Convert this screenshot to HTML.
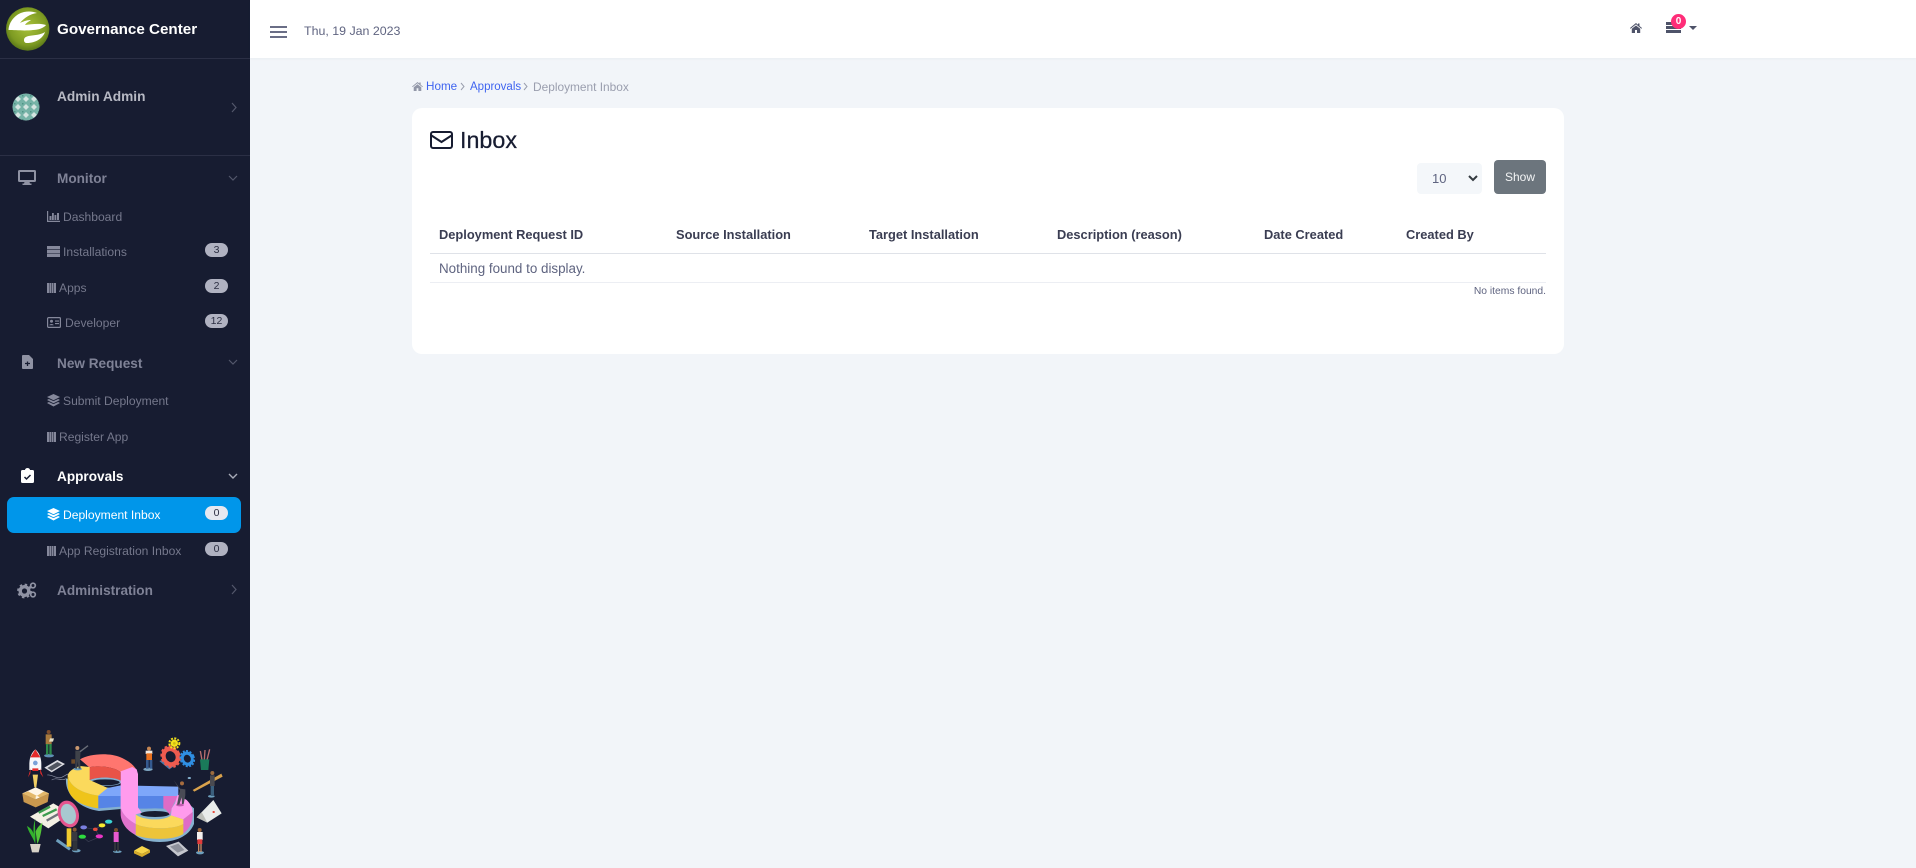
<!DOCTYPE html>
<html lang="en"><head><meta charset="utf-8"><title>Inbox - Governance Center</title>
<style>
*{box-sizing:border-box}
html,body{margin:0;padding:0;width:1916px;height:868px;overflow:hidden;background:#f2f5f9;font-family:"Liberation Sans",sans-serif}
#side{position:absolute;left:0;top:0;width:250px;height:868px;background:#171c31}
#top{position:absolute;left:250px;top:0;width:1666px;height:58px;background:#fff;box-shadow:0 1px 2px rgba(60,70,90,.05)}
.t{position:absolute;white-space:nowrap;line-height:20px;height:20px}
.h{left:57px;font-size:13.6px;font-weight:700;color:#7f8296}
.s{font-size:12.1px;color:#75788c}
.b{position:absolute;left:205px;width:23px;height:14px;border-radius:7px;background:#b0b2c1;color:#2b2e42;font-size:10.5px;line-height:15px;text-align:center}
.hr{position:absolute;left:0;width:250px;height:1px;background:#2b2f45}
.th{position:absolute;white-space:nowrap;top:225px;line-height:20px;font-size:12.85px;font-weight:700;color:#3a3d52}
svg{position:absolute;overflow:visible}
</style></head><body>
<div id="side">
<svg style="left:0;top:0" width="60" height="60" viewBox="0 0 60 60"><defs><radialGradient id="g" cx=".5" cy=".45" r=".6"><stop offset="0" stop-color="#a9c23a"/><stop offset=".7" stop-color="#7d9a22"/><stop offset="1" stop-color="#4c6a14"/></radialGradient></defs><circle cx="27.7" cy="29" r="21.7" fill="url(#g)"/><path d="M8.500 30C9 22 15 14 24 12c5-1 9-.5 13 1-7 1-13 5-17 10 4-2 8-3 11-3-3 2-5 3-6 5 7-1 15-2 21 0-2 3-8 5-13 5-8 1-18 0-24.500 0z" fill="#fff"/><path d="M24 40c0-3 3-4 8-4.500 5-.5 10-1.500 13-3.500-2 6-9 11-18 11-2 0-3-1-3-3z" fill="#fff"/></svg>
<span class="t" style="left:57px;top:20px;font-size:15.2px;font-weight:700;color:#fff">Governance Center</span>
<div class="hr" style="top:58px"></div>

<svg style="left:12px;top:93px" width="28" height="28" viewBox="0 0 28 28"><defs><pattern id="p" width="8" height="8" patternUnits="userSpaceOnUse" x="2" y="2"><rect width="8" height="8" fill="#76b3a7"/><path d="M4 1l3 3-3 3-3-3z" fill="#d3e4e0"/><path d="M0 0h1.500v1.500H0z" fill="#4f9486"/></pattern></defs><circle cx="14" cy="14" r="13.5" fill="url(#p)"/></svg>
<span class="t" style="left:57px;top:87px;font-size:13.7px;font-weight:700;color:#b7b9c4">Admin Admin</span>
<svg style="left:230px;top:101px" width="8" height="12" fill="none" stroke="#53576b" stroke-width="1.2"><path d="M2 2l4 4.500L2 11"/></svg>
<div class="hr" style="top:155px"></div>

<svg style="left:18px;top:170px" width="18" height="15" viewBox="0 0 18 15"><path d="M1.500 0h15A1.500 1.500 0 0 1 18 1.500v9a1.500 1.500 0 0 1-1.500 1.500H11.500l.5 1.500h1.500v1.500h-9V13.500H6L6.500 12H1.500A1.500 1.500 0 0 1 0 10.500v-9A1.500 1.500 0 0 1 1.500 0zM2 2v8h14V2z" fill="#8f92a3"/></svg>
<span class="t h" style="top:169px">Monitor</span>
<svg style="left:228px;top:174px" width="10" height="8" fill="none" stroke="#53576b" stroke-width="1.2"><path d="M1 2l4 4 4-4"/></svg>

<svg style="left:47px;top:211px" width="13" height="11" viewBox="0 0 13 11"><path d="M0 0h1.200v9.800H13V11H0zM2.500 5h2v4h-2zM5 2h1.800v7H5zM7.500 4h1.800v5H7.500zM10 2h2v7h-2z" fill="#85889b"/></svg>
<span class="t s" style="left:63px;top:207px">Dashboard</span>

<svg style="left:47px;top:246px" width="13" height="11" viewBox="0 0 13 11"><path d="M0 0h13v3.300H0zM0 3.900h13v3.300H0zM0 7.800h13V11H0z" fill="#85889b"/></svg>
<span class="t s" style="left:63px;top:242px">Installations</span>
<span class="b" style="top:243px">3</span>

<svg style="left:47px;top:283px" width="9" height="10" viewBox="0 0 9 10"><path d="M0 0h2v10H0zM2.400 0h1.800v10H2.400zM4.700 0h1.800v10H4.700zM7 0h2v10H7z" fill="#85889b"/></svg>
<span class="t s" style="left:59px;top:278px">Apps</span>
<span class="b" style="top:279px">2</span>

<svg style="left:47px;top:317px" width="14" height="11" viewBox="0 0 14 11"><rect x=".6" y=".6" width="12.800" height="9.800" rx="1" fill="none" stroke="#85889b" stroke-width="1.200"/><circle cx="4.500" cy="4.200" r="1.500" fill="#85889b"/><path d="M2.300 8.300c0-1.800 4.400-1.800 4.400 0zM8 3.500h4v1.100H8zM8 6h4v1.100H8z" fill="#85889b"/></svg>
<span class="t s" style="left:65px;top:313px">Developer</span>
<span class="b" style="top:314px">12</span>

<svg style="left:22px;top:355px" width="11" height="14" viewBox="0 0 11 14"><path d="M1 0h6l4 4v9a1 1 0 0 1-1 1H1a1 1 0 0 1-1-1V1a1 1 0 0 1 1-1z" fill="#8f92a3"/><path d="M3 8.500h5M5.500 6.500v4.500" stroke="#171c31" stroke-width="1.300"/></svg>
<span class="t h" style="top:354px">New Request</span>
<svg style="left:228px;top:358px" width="10" height="8" fill="none" stroke="#53576b" stroke-width="1.2"><path d="M1 2l4 4 4-4"/></svg>

<svg style="left:47px;top:394px" width="13" height="13" viewBox="0 0 13 13"><path d="M6.500 0L13 3 6.500 6.200 0 3zM1.800 5L6.500 7.100 11.200 5 13 6 6.500 9.200 0 6zM1.800 8L6.500 10.100 11.200 8 13 9 6.500 12.500 0 9z" fill="#85889b"/></svg>
<span class="t s" style="left:63px;top:391px">Submit Deployment</span>

<svg style="left:47px;top:432px" width="9" height="10" viewBox="0 0 9 10"><path d="M0 0h2v10H0zM2.400 0h1.800v10H2.400zM4.700 0h1.800v10H4.700zM7 0h2v10H7z" fill="#85889b"/></svg>
<span class="t s" style="left:59px;top:427px">Register App</span>

<svg style="left:21px;top:468px" width="13" height="15" viewBox="0 0 13 15"><path d="M1.500 2H4a2.500 2 0 0 1 5 0h2.500A1.500 1.500 0 0 1 13 3.500v10a1.500 1.500 0 0 1-1.500 1.500h-10A1.500 1.500 0 0 1 0 13.500v-10A1.500 1.500 0 0 1 1.500 2z" fill="#fff"/><path d="M3.500 9l2 2 4-4" fill="none" stroke="#171c31" stroke-width="1.500"/></svg>
<span class="t h" style="top:467px;color:#fff">Approvals</span>
<svg style="left:228px;top:472px" width="10" height="8" fill="none" stroke="#a8abb8" stroke-width="1.4"><path d="M1 2l4 4 4-4"/></svg>

<div style="position:absolute;left:7px;top:497px;width:234px;height:36px;border-radius:7px;background:#0096ea"></div>
<svg style="left:47px;top:508px" width="13" height="13" viewBox="0 0 13 13"><path d="M6.500 0L13 3 6.500 6.200 0 3zM1.800 5L6.500 7.100 11.200 5 13 6 6.500 9.200 0 6zM1.800 8L6.500 10.100 11.200 8 13 9 6.500 12.500 0 9z" fill="#fff"/></svg>
<span class="t s" style="left:63px;top:505px;color:#fff">Deployment Inbox</span>
<span class="b" style="top:506px;background:#e6e8f0">0</span>

<svg style="left:47px;top:546px" width="9" height="10" viewBox="0 0 9 10"><path d="M0 0h2v10H0zM2.400 0h1.800v10H2.400zM4.700 0h1.800v10H4.700zM7 0h2v10H7z" fill="#85889b"/></svg>
<span class="t s" style="left:59px;top:541px">App Registration Inbox</span>
<span class="b" style="top:542px">0</span>

<svg style="left:17px;top:582px" width="20" height="16" viewBox="0 0 20 16"><circle cx="7.500" cy="9" r="4.300" fill="none" stroke="#8f92a3" stroke-width="3.400"/><circle cx="7.500" cy="9" r="6.500" fill="none" stroke="#8f92a3" stroke-width="1.800" stroke-dasharray="2.500 2.600"/><circle cx="16" cy="3.500" r="2.300" fill="none" stroke="#8f92a3" stroke-width="1.700"/><circle cx="16" cy="12.500" r="2.300" fill="none" stroke="#8f92a3" stroke-width="1.700"/></svg>
<span class="t h" style="top:581px">Administration</span>
<svg style="left:230px;top:583px" width="8" height="12" fill="none" stroke="#53576b" stroke-width="1.2"><path d="M2 2l4 4.500L2 11"/></svg>

<!-- infinity illustration -->
<svg style="left:0;top:700px" width="260" height="168" viewBox="0 0 780 504">
<!-- rim -->
<path d="M198 235C194 285 240 325 297 333L362 327C364 370 400 412 440 422C490 432 560 425 582 372L582 325 540 290 300 260Z" fill="#85b1cf"/>
<!-- left hole -->
<ellipse cx="315" cy="245" rx="50" ry="13" fill="#85b1cf"/>
<ellipse cx="315" cy="247" rx="44" ry="9" fill="#171c31"/>
<!-- red -->
<path d="M240 178C270 160 330 158 362 172 385 182 402 195 411 212L362 217C345 202 300 195 268 202Z" fill="#ff766f"/>
<path d="M268 202C300 195 345 202 362 217V242C345 232 300 228 268 240Z" fill="#e95347"/>
<!-- yellow left -->
<path d="M203 225C208 212 222 204 240 198L269 201V240L323 264 295 287C250 280 208 262 203 225Z" fill="#fbd95c"/>
<path d="M203 225C208 262 250 280 295 287V325C245 318 200 296 203 250Z" fill="#efc41a"/>
<!-- blue -->
<path d="M295 287L323 264 362 256 535 260V290H295Z" fill="#7ea7fa"/>
<path d="M295 288H362V320L295 325ZM413 288H492V326H413Z" fill="#5684e6"/>
<!-- right hole -->
<ellipse cx="465" cy="340" rx="52" ry="15" fill="#85b1cf"/>
<ellipse cx="465" cy="342" rx="44" ry="9" fill="#171c31"/>
<!-- pink right -->
<path d="M490 288H533L515 325 510 345C500 330 495 326 490 325Z" fill="#df6cc6"/>
<path d="M533 284L560 300C572 312 578 325 578 336L550 358 513 346 515 325 525 310Z" fill="#ff9bed"/>
<path d="M550 358L578 336C580 358 572 385 550 400Z" fill="#df6cc6"/>
<!-- yellow bottom -->
<path d="M407 343C425 360 490 365 513 346L550 358V372C520 390 440 388 407 372Z" fill="#fbd95c"/>
<path d="M407 372C440 388 520 390 550 372V402C520 422 440 420 407 405Z" fill="#edc43a"/>
<!-- pink strip -->
<path d="M362 214L397 201 410 208 414 222V322L425 338 407 343V372C385 360 366 342 362 322Z" fill="#ff9bed"/>
<path d="M362 322C366 342 385 360 407 372V405C385 395 364 372 362 345Z" fill="#e173cc"/>
<!-- top-left man -->
<ellipse cx="233" cy="207" rx="13" ry="4" fill="#6d9fbd"/>
<path d="M226 152h16l-2 30 2 24h-6l-3-22-2 22h-5z" fill="#3f4249"/><circle cx="232" cy="144" r="6" fill="#c9986f"/><path d="M240 155l24-18" stroke="#6a6e78" stroke-width="4"/><rect x="214" y="178" width="11" height="13" fill="#6d4b2a"/>
<!-- man top far left -->
<ellipse cx="147" cy="167" rx="15" ry="5" fill="#5e8fb4"/>
<rect x="137" y="103" width="18" height="30" fill="#a97a3d"/><circle cx="146" cy="96" r="6" fill="#7f4e2c"/><rect x="138" y="132" width="7" height="32" fill="#2d8a4a"/><rect x="148" y="132" width="7" height="32" fill="#2d8a4a"/><path d="M150 115h12l-3 10h-12z" fill="#e6e1c8"/>
<!-- rocket -->
<path d="M106 148C118 158 124 174 124 193V210H88V193C88 174 94 158 106 148Z" fill="#f7f7fa"/><path d="M106 148L91 172H121ZM92 205L84 232 91 220ZM120 205L130 232 121 220ZM97 205H115V213H97Z" fill="#e52b2b"/><circle cx="106" cy="189" r="7" fill="#7aa0d8"/><path d="M98 224H114L109 262H103Z" fill="#f1cf64"/>
<!-- box -->
<path d="M67 280L107 262 147 280 107 298Z" fill="#fff6e6"/><path d="M67 280L107 298V322L71 306ZM147 280L107 298V322L143 306Z" fill="#c9984e"/><path d="M67 280L84 274 120 292 107 298ZM147 280L132 274 107 290V298Z" fill="#e4b96b"/>
<!-- phone + cables -->
<path d="M133 203L172 180 195 192 155 217Z" fill="#dcdce2"/><path d="M142 204L172 186 186 193 155 212Z" fill="#50545f"/>
<path d="M142 225C155 222 170 238 185 232 195 228 200 222 205 222M155 240C170 230 185 245 198 236" fill="none" stroke="#8a8fa3" stroke-width="2"/>
<!-- doc -->
<path d="M90 350L160 310 212 340 145 385Z" fill="#f4f1e4"/><path d="M116 338L150 320M128 348L170 328" stroke="#3d9c4e" stroke-width="7"/><path d="M140 362L175 342" stroke="#70737b" stroke-width="7"/>
<!-- magnifier -->
<path d="M170 420L210 448" stroke="#6d9fbd" stroke-width="9"/><rect x="200" y="385" width="14" height="55" fill="#f0cb2e"/>
<ellipse cx="205" cy="342" rx="31" ry="41" fill="#e5558e" transform="rotate(-18 205 342)"/><ellipse cx="205" cy="342" rx="22" ry="31" fill="#a8c8d0" transform="rotate(-18 205 342)"/>
<ellipse cx="229" cy="452" rx="13" ry="5" fill="#6d9fbd"/><rect x="216" y="396" width="16" height="28" fill="#3a3a40"/><rect x="218" y="424" width="14" height="28" fill="#2f333a"/><circle cx="224" cy="389" r="6" fill="#8a5a36"/>
<!-- plant -->
<path d="M107 355C102 373 108 388 106 432 98 410 86 398 81 378 92 384 98 392 101 402 100 385 100 370 107 355Z" fill="#33b32d"/><path d="M107 395C111 383 120 375 127 368 125 390 121 415 112 432Z" fill="#53c538"/><path d="M90 432H122L116 457H96Z" fill="#d8d3c8"/>
<!-- flow -->
<path d="M250 382L285 388 305 375M285 388L300 410 265 425 248 410M285 388L325 365" fill="none" stroke="#3c4055" stroke-width="2"/>
<ellipse cx="251" cy="382" rx="10" ry="6" fill="#7a7fe0"/><ellipse cx="286" cy="388" rx="7" ry="5" fill="#e74c3c"/><ellipse cx="306" cy="376" rx="10" ry="6" fill="#f7ea2f"/><ellipse cx="326" cy="365" rx="11" ry="6" fill="#3bd4d4"/><ellipse cx="298" cy="409" rx="11" ry="6" fill="#e835c4"/><ellipse cx="247" cy="410" rx="11" ry="6" fill="#2edb3f"/>
<!-- pink person -->
<ellipse cx="352" cy="455" rx="13" ry="4" fill="#6d9fbd"/><rect x="341" y="396" width="15" height="30" fill="#e85ad1"/><circle cx="348" cy="390" r="6" fill="#7b4f2c"/><rect x="342" y="426" width="6" height="28" fill="#2f333a"/><rect x="351" y="426" width="6" height="28" fill="#2f333a"/>
<!-- block + calc -->
<path d="M402 452L426 438 450 450 426 462Z" fill="#f7d54a"/><path d="M402 452L426 462 450 450V458L426 471 402 460Z" fill="#d6ac2b"/>
<path d="M498 438L536 425 565 452 534 469Z" fill="#c5c7ce"/><path d="M510 440L535 431 553 450 533 458Z" fill="#8e919b"/>
<!-- woman right -->
<ellipse cx="600" cy="458" rx="12" ry="5" fill="#6d9fbd"/><rect x="591" y="396" width="17" height="24" fill="#f4f0ee"/><rect x="592" y="418" width="15" height="14" fill="#e23b3b"/><circle cx="599" cy="390" r="6" fill="#a66c3e"/><rect x="594" y="432" width="4" height="24" fill="#c88c62"/><rect x="601" y="432" width="4" height="24" fill="#c88c62"/>
<!-- orange man -->
<ellipse cx="444" cy="208" rx="14" ry="5" fill="#7da5c0"/><rect x="437" y="152" width="20" height="10" fill="#efe7df"/><rect x="439" y="160" width="17" height="20" fill="#e8701f"/><circle cx="447" cy="146" r="6" fill="#c68653"/><rect x="438" y="180" width="8" height="26" fill="#355a8f"/><rect x="449" y="180" width="8" height="26" fill="#355a8f"/>
<!-- gears -->
<path d="M478 183L508 208 520 200 495 178Z" fill="#4e79a7"/>
<g transform="translate(512 170) rotate(-25) scale(.85 1)"><circle r="24" fill="none" stroke="#ee5b4f" stroke-width="14"/><circle r="32" fill="none" stroke="#ee5b4f" stroke-width="6" stroke-dasharray="9 7"/></g>
<g transform="translate(562 176) rotate(-25) scale(.85 1)"><circle r="17" fill="none" stroke="#2f8fe3" stroke-width="10"/><circle r="24" fill="none" stroke="#2f8fe3" stroke-width="5" stroke-dasharray="7 5"/></g>
<circle cx="523" cy="130" r="11" fill="#f3e21b"/><circle cx="523" cy="130" r="15" fill="none" stroke="#f3e21b" stroke-width="6" stroke-dasharray="6 4"/><circle cx="523" cy="130" r="4" fill="#cdbb14"/>
<!-- cup -->
<path d="M606 180L601 153M613 180L615 150M621 180L629 148" stroke="#b96f6f" stroke-width="4"/><path d="M600 178H628L625 210H603Z" fill="#1a7a5a"/>
<!-- ruler + person -->
<path d="M578 270L664 221 668 230 583 275Z" fill="#d9a24c"/><ellipse cx="634" cy="289" rx="10" ry="4" fill="#6d9fbd"/><rect x="630" y="226" width="14" height="32" fill="#4a4a50"/><circle cx="637" cy="219" r="6" fill="#9c6b3e"/><rect x="632" y="258" width="10" height="30" fill="#3a5f7d"/>
<!-- man on loop -->
<ellipse cx="540" cy="315" rx="12" ry="4" fill="#c25cb0"/><path d="M521 240L540 266 556 268V286L551 312H546L545 292 538 314H531L537 284 540 272Z" fill="#4a4b55"/><circle cx="546" cy="250" r="6" fill="#a66c3e"/>
<ellipse cx="568" cy="234" rx="5" ry="3" fill="#85b1cf"/>
<!-- calendar -->
<path d="M590 352L640 300 665 340 622 368Z" fill="#e9ecea"/><path d="M590 352L605 336 622 368Z" fill="#bdbfb9"/><rect x="638" y="333" width="6" height="6" fill="#e74c3c"/>
</svg>
</div>

<div id="top"></div>
<svg style="left:270px;top:26px" width="17" height="12"><path d="M0 1h17M0 6h17M0 11h17" stroke="#555a75" stroke-width="1.700"/></svg>
<span class="t" style="left:304px;top:21px;font-size:12.4px;color:#5f6480">Thu, 19 Jan 2023</span>
<svg style="left:1630px;top:23px" width="12" height="10" viewBox="0 0 12 10"><path d="M6 0l2 1.700V.5h1.500V3L12 5l-.6.700L6 1.400.6 5.700 0 5zM1.800 5.800L6 2.500l4.200 3.300V10H7V7H5v3H1.800z" fill="#4e5369"/></svg>
<svg style="left:1666px;top:22px" width="15" height="11" viewBox="0 0 15 11"><path d="M0 0h15v3H0zM0 4h15v3H0zM0 8h15v3H0z" fill="#4e5369"/></svg>
<div style="position:absolute;left:1671px;top:14px;width:15px;height:15px;border-radius:50%;background:#ff2d78;color:#fff;font-size:10px;font-weight:700;line-height:15px;text-align:center">0</div>
<svg style="left:1689px;top:26px" width="8" height="5"><path d="M0 0h8L4 4z" fill="#4e5369"/></svg>

<svg style="left:412px;top:82px" width="11" height="9" viewBox="0 0 12 10"><path d="M6 0l2 1.700V.5h1.500V3L12 5l-.6.700L6 1.400.6 5.700 0 5zM1.800 5.800L6 2.500l4.200 3.300V10H7V7H5v3H1.800z" fill="#9297a8"/></svg>
<span class="t" style="left:426px;top:77px;font-size:11.7px;color:#3f64f0">Home</span>
<svg style="left:460px;top:82px" width="6" height="9" fill="none" stroke="#9a9eae" stroke-width="1"><path d="M1 1l3 3.500L1 8"/></svg>
<span class="t" style="left:470px;top:77px;font-size:11.500px;color:#3f64f0">Approvals</span>
<svg style="left:523px;top:82px" width="6" height="9" fill="none" stroke="#9a9eae" stroke-width="1"><path d="M1 1l3 3.500L1 8"/></svg>
<span class="t" style="left:533px;top:77px;font-size:11.900px;color:#9a9eae">Deployment Inbox</span>

<div style="position:absolute;left:412px;top:108px;width:1152px;height:246px;border-radius:10px;background:#fff"></div>
<svg style="left:430px;top:131px" width="23" height="18" viewBox="0 0 23 18"><rect x="1" y="1" width="21" height="16" rx="2" fill="none" stroke="#171c31" stroke-width="2"/><path d="M1.500 4.500l10 6.500 10-6.500" fill="none" stroke="#171c31" stroke-width="2"/></svg>
<span class="t" style="left:460px;top:130px;font-size:23.300px;color:#171c31;-webkit-text-stroke:.25px #171c31">Inbox</span>

<div style="position:absolute;left:1417px;top:163px;width:65px;height:31px;border-radius:4px;background:#f4f7fa"></div>
<span class="t" style="left:1432px;top:169px;font-size:13px;color:#5f6480">10</span>
<svg style="left:1468px;top:175px" width="10" height="7" fill="none" stroke="#343a40" stroke-width="2"><path d="M1 1l4 4 4-4"/></svg>
<div style="position:absolute;left:1494px;top:160px;width:52px;height:34px;border-radius:4px;background:#6c757d"></div>
<span class="t" style="left:1494px;width:52px;text-align:center;top:167px;font-size:12px;color:#f3f4f5">Show</span>

<span class="th" style="left:439px">Deployment Request ID</span>
<span class="th" style="left:676px">Source Installation</span>
<span class="th" style="left:869px">Target Installation</span>
<span class="th" style="left:1057px">Description (reason)</span>
<span class="th" style="left:1264px">Date Created</span>
<span class="th" style="left:1406px">Created By</span>
<div style="position:absolute;left:430px;top:253px;width:1116px;height:1px;background:#dfe2e8"></div>
<span class="t" style="left:439px;top:259px;font-size:13.400px;color:#5f6480">Nothing found to display.</span>
<div style="position:absolute;left:430px;top:282px;width:1116px;height:1px;background:#eceef3"></div>
<span class="t" style="right:370px;top:282px;font-size:10.300px;color:#5f6480">No items found.</span>
</body></html>
